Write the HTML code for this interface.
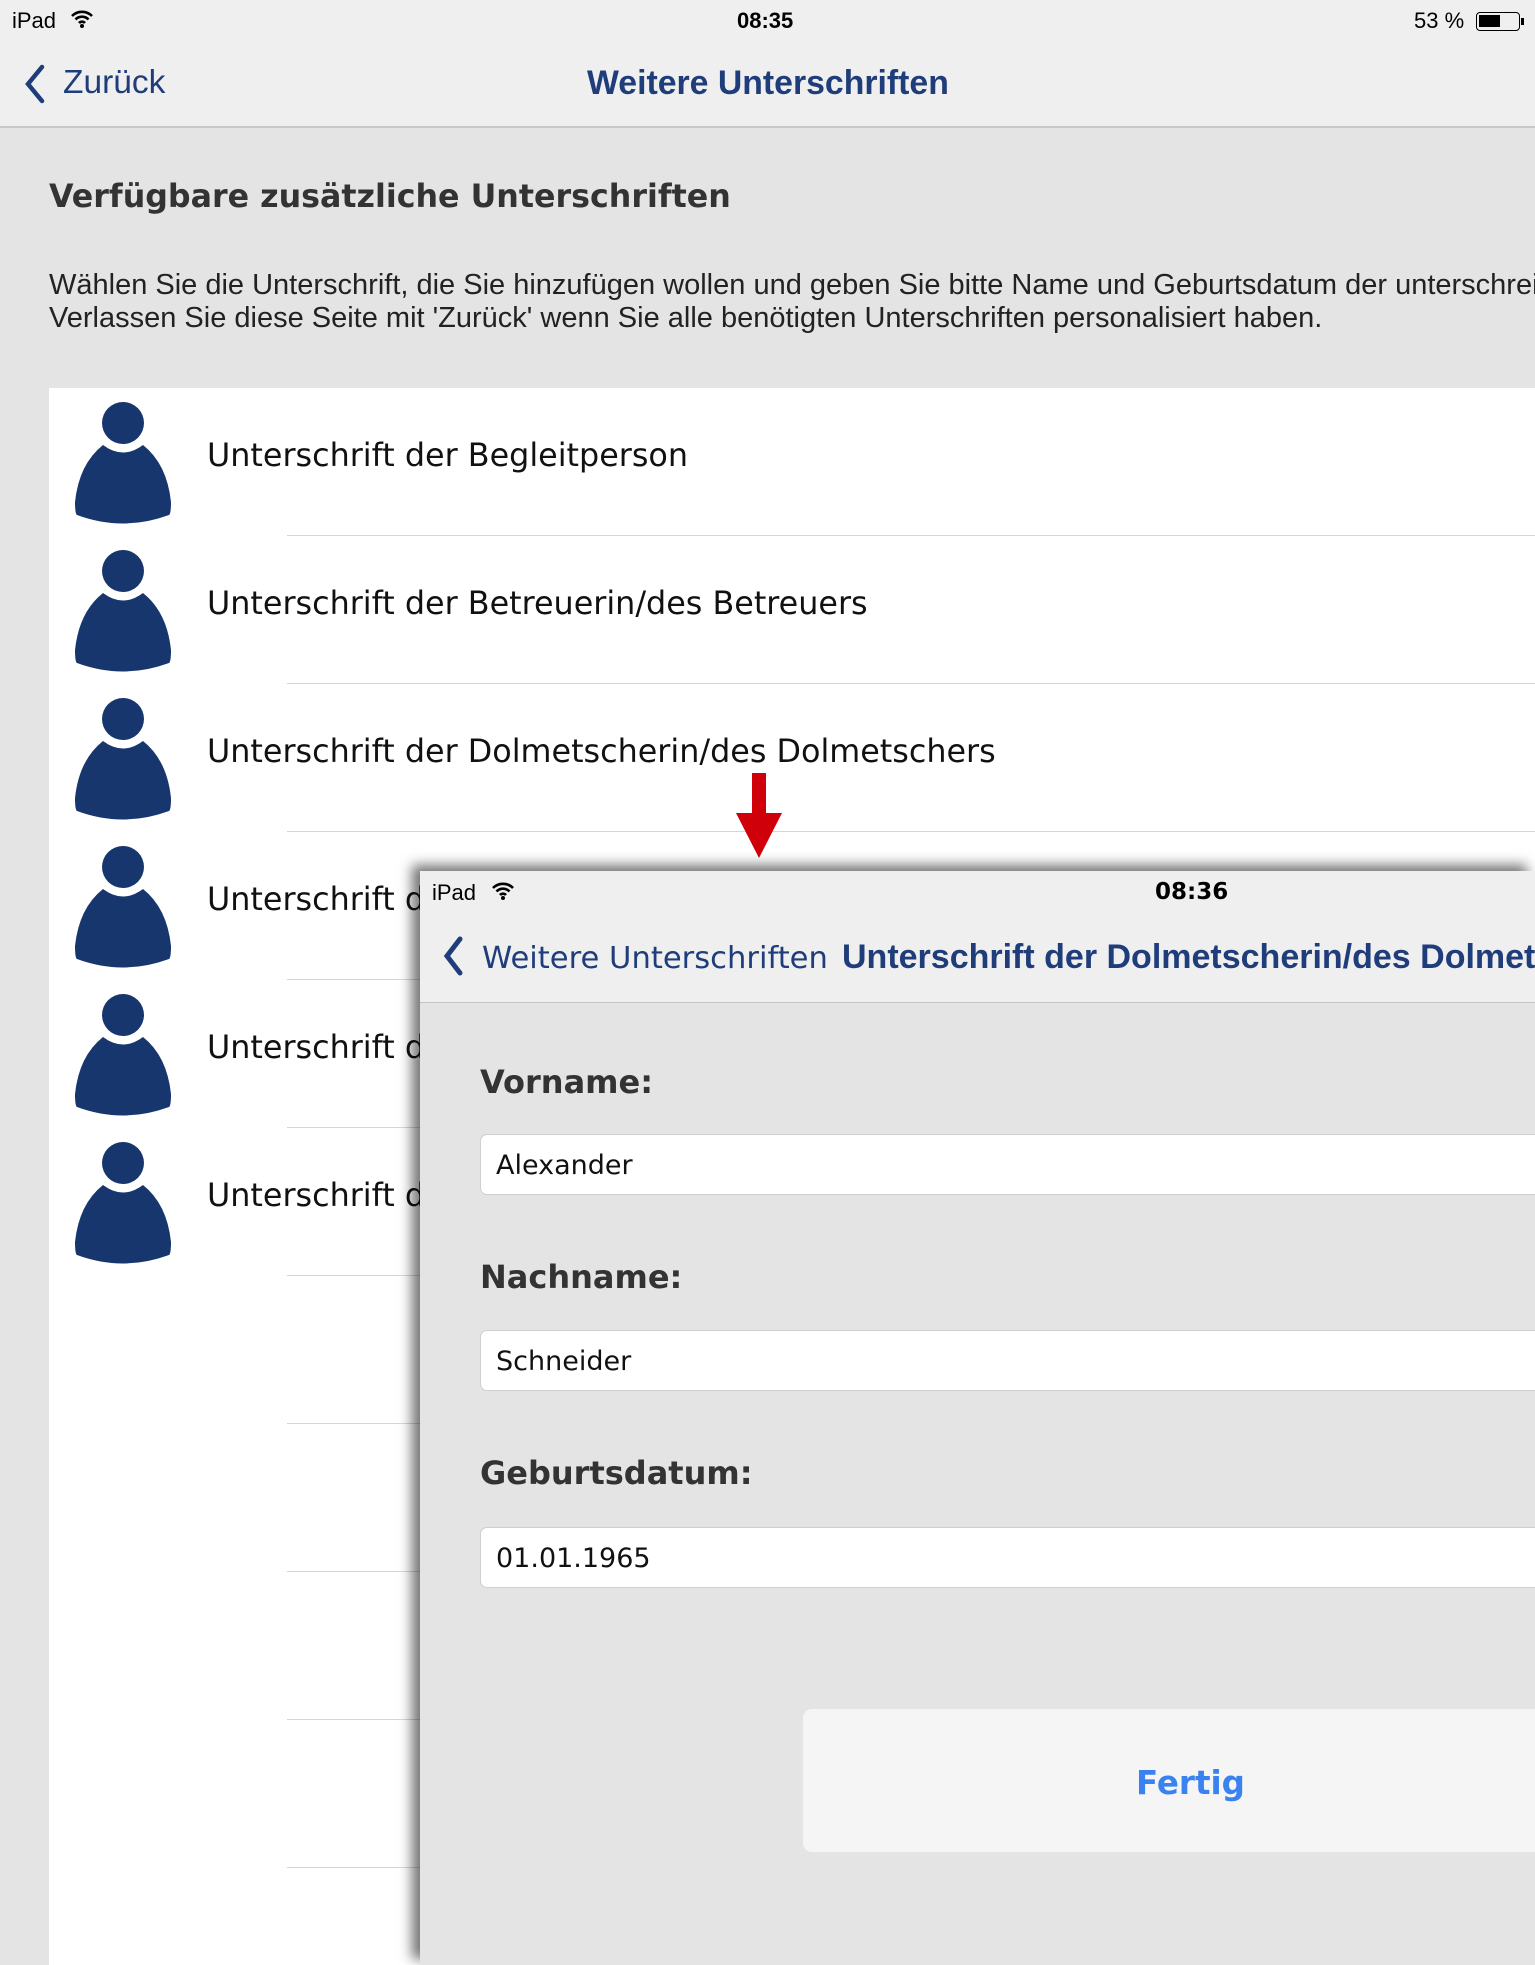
<!DOCTYPE html>
<html style="overflow:hidden"><head><meta charset="utf-8"><style>
*{margin:0;padding:0;box-sizing:border-box}
html,body{width:1535px;height:1965px;overflow:hidden}
body{background:#e4e4e4;font-family:"DejaVu Sans","Liberation Sans",sans-serif}
#w{position:relative;width:1535px;height:1965px;overflow:hidden;background:#e4e4e4}
.abs{position:absolute;white-space:nowrap}
.sb{font-family:"Liberation Sans",sans-serif;font-size:22px;color:#000}
.nav{position:absolute;left:0;top:0;width:1535px;height:128px;background:#efefef;border-bottom:2px solid #c8c8c8}
.list{position:absolute;left:49px;top:388px;width:1486px;height:1577px;background:#fff;overflow:hidden}
.row{position:absolute;left:0;width:1486px;height:148px}
.row .t{position:absolute;left:158px;top:49px;font-size:31.8px;color:#111;white-space:nowrap}
.row .sep{position:absolute;left:238px;right:0;bottom:0;height:1.5px;background:#d6d6d6}
.row svg{position:absolute;left:26px;top:0}
.ov{position:absolute;left:420px;top:871px;width:1115px;height:1094px;background:#e4e4e4;box-shadow:-8px -6px 12px rgba(0,0,0,.55);overflow:hidden}
.lbl{position:absolute;left:60px;font-size:32px;font-weight:bold;color:#333;white-space:nowrap}
.inp{position:absolute;left:60px;width:1100px;height:61px;background:#fff;border:1.5px solid #cfcfcf;border-radius:7px;font-size:27px;color:#111;padding:15px 0 0 15px}
</style></head><body><div id="w">
<div class="nav">
 <div class="abs sb" style="left:12px;top:8px">iPad</div>
 <svg class="abs" style="left:70px;top:9px" width="24" height="20" viewBox="0 0 24 20"><path d="M2 7a14 14 0 0 1 20 0M5.5 10.5a9 9 0 0 1 13 0M9 14a4 4 0 0 1 6 0" stroke="#000" stroke-width="2.6" fill="none"/><circle cx="12" cy="17" r="2" fill="#000"/></svg>
 <div class="abs sb" style="left:737px;top:8px;font-weight:bold">08:35</div>
 <div class="abs sb" style="left:1414px;top:8px">53 %</div>
 <div class="abs" style="left:1476px;top:12px;width:44px;height:19px;border:1.5px solid #000;border-radius:4px"><div style="margin:2px;width:21px;height:12px;background:#000"></div></div>
 <div class="abs" style="left:1521px;top:18px;width:3px;height:7px;background:#000"></div>
 <svg class="abs" style="left:24px;top:64px" width="22" height="40" viewBox="0 0 22 40"><path d="M18 3L4 20l14 17" stroke="#1f3d7a" stroke-width="4.5" fill="none" stroke-linecap="round"/></svg>
 <div class="abs" style="left:63px;top:64px;font-family:'Liberation Sans',sans-serif;font-size:33.5px;color:#1f3d7a">Zurück</div>
 <div class="abs" style="left:587px;top:64px;font-family:'Liberation Sans',sans-serif;font-size:33.8px;color:#1f3d7a;font-weight:bold">Weitere Unterschriften</div>
</div>
<div class="abs" style="left:49px;top:179px;font-size:31.7px;font-weight:bold;color:#333">Verfügbare zusätzliche Unterschriften</div>
<div class="abs" style="left:49px;top:269px;font-family:'Liberation Sans',sans-serif;font-size:29px;line-height:33px;color:#222">Wählen Sie die Unterschrift, die Sie hinzufügen wollen und geben Sie bitte Name und Geburtsdatum der unterschreibenden Person ein.<br>Verlassen Sie diese Seite mit 'Zurück' wenn Sie alle benötigten Unterschriften personalisiert haben.</div>
<div class="list">
<div class="row" style="top:0"><svg width="96" height="148" viewBox="0 0 96 148"><circle cx="48" cy="35" r="21" fill="#17366e"/><path d="M28 57Q48 72 68 57Q92 76 96 114Q96 126 94 127Q48 144 2 127Q0 126 0 114Q4 76 28 57Z" fill="#17366e"/></svg><div class="t">Unterschrift der Begleitperson</div><div class="sep"></div></div>
<div class="row" style="top:148px"><svg width="96" height="148" viewBox="0 0 96 148"><circle cx="48" cy="35" r="21" fill="#17366e"/><path d="M28 57Q48 72 68 57Q92 76 96 114Q96 126 94 127Q48 144 2 127Q0 126 0 114Q4 76 28 57Z" fill="#17366e"/></svg><div class="t">Unterschrift der Betreuerin/des Betreuers</div><div class="sep"></div></div>
<div class="row" style="top:296px"><svg width="96" height="148" viewBox="0 0 96 148"><circle cx="48" cy="35" r="21" fill="#17366e"/><path d="M28 57Q48 72 68 57Q92 76 96 114Q96 126 94 127Q48 144 2 127Q0 126 0 114Q4 76 28 57Z" fill="#17366e"/></svg><div class="t">Unterschrift der Dolmetscherin/des Dolmetschers</div><div class="sep"></div></div>
<div class="row" style="top:444px"><svg width="96" height="148" viewBox="0 0 96 148"><circle cx="48" cy="35" r="21" fill="#17366e"/><path d="M28 57Q48 72 68 57Q92 76 96 114Q96 126 94 127Q48 144 2 127Q0 126 0 114Q4 76 28 57Z" fill="#17366e"/></svg><div class="t">Unterschrift der gesetzlichen Vertreter</div><div class="sep"></div></div>
<div class="row" style="top:592px"><svg width="96" height="148" viewBox="0 0 96 148"><circle cx="48" cy="35" r="21" fill="#17366e"/><path d="M28 57Q48 72 68 57Q92 76 96 114Q96 126 94 127Q48 144 2 127Q0 126 0 114Q4 76 28 57Z" fill="#17366e"/></svg><div class="t">Unterschrift der gesetzlichen Vertreter</div><div class="sep"></div></div>
<div class="row" style="top:740px"><svg width="96" height="148" viewBox="0 0 96 148"><circle cx="48" cy="35" r="21" fill="#17366e"/><path d="M28 57Q48 72 68 57Q92 76 96 114Q96 126 94 127Q48 144 2 127Q0 126 0 114Q4 76 28 57Z" fill="#17366e"/></svg><div class="t">Unterschrift der Ehepartner</div><div class="sep"></div></div>
<div class="row" style="top:888px"><div class="sep"></div></div>
<div class="row" style="top:1036px"><div class="sep"></div></div>
<div class="row" style="top:1184px"><div class="sep"></div></div>
<div class="row" style="top:1332px"><div class="sep"></div></div>
</div>
<svg class="abs" style="left:736px;top:773px" width="46" height="86" viewBox="0 0 46 86"><rect x="16" y="0" width="14" height="42" fill="#d0000a"/><path d="M0 40H46L23 85Z" fill="#d0000a"/></svg>
<div class="ov">
 <div style="position:absolute;left:0;top:0;width:1115px;height:132px;background:#efefef;border-bottom:1.5px solid #c4c4c4"></div>
 <div class="abs sb" style="left:12px;top:9px">iPad</div>
 <svg class="abs" style="left:71px;top:10px" width="24" height="20" viewBox="0 0 24 20"><path d="M2 7a14 14 0 0 1 20 0M5.5 10.5a9 9 0 0 1 13 0M9 14a4 4 0 0 1 6 0" stroke="#000" stroke-width="2.6" fill="none"/><circle cx="12" cy="17" r="2" fill="#000"/></svg>
 <div class="abs" style="left:735px;top:8px;font-size:23px;font-weight:bold">08:36</div>
 <svg class="abs" style="left:22px;top:65px" width="22" height="40" viewBox="0 0 22 40"><path d="M18 3L5 20l13 17" stroke="#1f3d7a" stroke-width="5" fill="none" stroke-linecap="round"/></svg>
 <div class="abs" style="left:62px;top:70px;font-size:30.6px;color:#1f3d7a">Weitere Unterschriften</div>
 <div class="abs" style="left:422px;top:67px;font-family:'Liberation Sans',sans-serif;font-size:34px;font-weight:bold;color:#1f3d7a">Unterschrift der Dolmetscherin/des Dolmetschers</div>
 <div class="lbl" style="top:192px">Vorname:</div>
 <div class="inp" style="top:263px">Alexander</div>
 <div class="lbl" style="top:387px">Nachname:</div>
 <div class="inp" style="top:459px">Schneider</div>
 <div class="lbl" style="top:583px">Geburtsdatum:</div>
 <div class="inp" style="top:656px">01.01.1965</div>
 <div style="position:absolute;left:383px;top:838px;width:900px;height:143px;background:#f5f5f5;border-radius:9px"></div>
 <div class="abs" style="left:716px;top:893px;font-size:32.5px;font-weight:bold;color:#3a82ef">Fertig</div>
</div>
</div></body></html>
